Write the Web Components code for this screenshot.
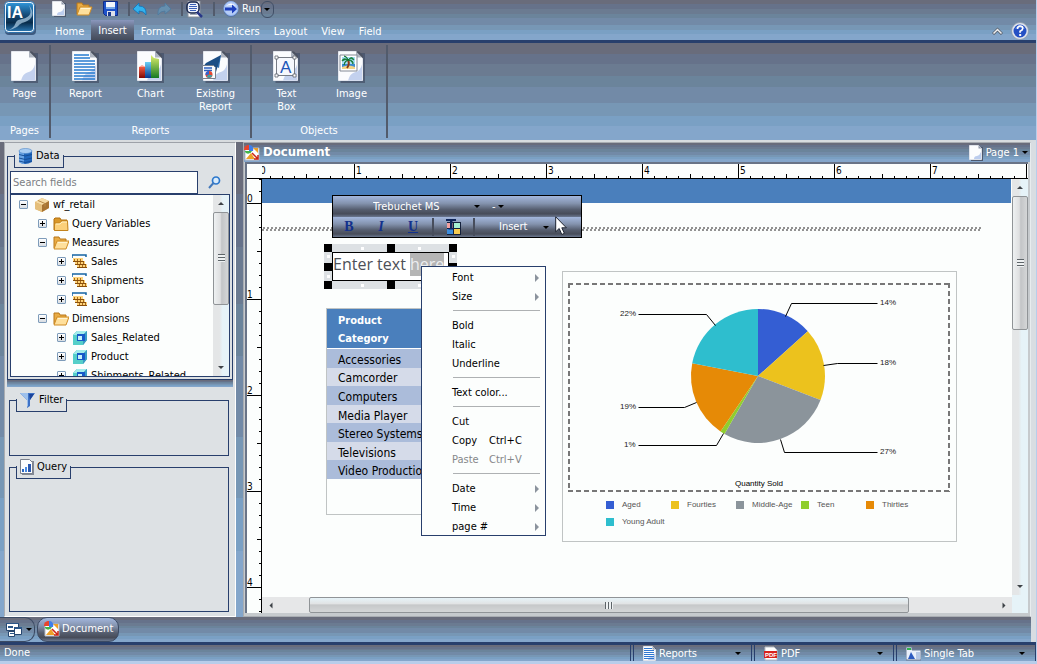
<!DOCTYPE html>
<html lang="en">
<head>
<meta charset="utf-8">
<title>Document</title>
<style>
  :root {
    --navy: #283f6c;
    --panel: #dde1e4;
    --steel: linear-gradient(#696c7b 11%, #66728a 11% 22%, #6b7b91 22% 34%, #6b849b 34% 45%, #728aa7 45% 62%, #7797b5 62% 75%, #7aa0c4 75% 86%, #84a6cb 86%);
    --dark: linear-gradient(#a3b7dd, #8493ae 35%, #555d6e 65%, #474c59 85%, #6b7890);
  }
  * { box-sizing: border-box; }
  body {
    margin: 0;
    padding: 0 1px 3px 0;
    height: 100vh;
    display: flex;
    flex-direction: column;
    overflow: hidden;
    background: #b7cdea;
    color: #000;
    font: 11px/14px "DejaVu Sans Condensed", "DejaVu Sans", sans-serif;
    font-stretch: condensed;
  }
  main {
    flex: 1;
    min-height: 0;
    display: flex;
    gap: 7px;
    padding-left: 4px;
    background: var(--steel);
    border-top: 2px solid #d8dcdf;
    border-right: 5px solid #d8dde2;
  }
</style>
</head>
<body>
<app-header></app-header>
<ribbon-bar>
  <ribbon-group label="Pages">
    <ribbon-button icon="page">Page</ribbon-button>
  </ribbon-group>
  <ribbon-group label="Reports">
    <ribbon-button icon="report">Report</ribbon-button>
    <ribbon-button icon="chart">Chart</ribbon-button>
    <ribbon-button icon="existing">Existing<br>Report</ribbon-button>
  </ribbon-group>
  <ribbon-group label="Objects">
    <ribbon-button icon="textbox">Text<br>Box</ribbon-button>
    <ribbon-button icon="image">Image</ribbon-button>
  </ribbon-group>
</ribbon-bar>
<main>
  <side-bar></side-bar>
  <document-window></document-window>
</main>
<task-bar></task-bar>
<status-bar></status-bar>

<script>
const sheet = (w, h) => `<path d="M${w * .1} 2h${w}v${h}H${w * .1}z" fill="#465168" opacity=".75"/><path d="M.5.5h${w - 7}l6 6v${h - 7}H.5z" fill="#fbfcfe" stroke="#e4e7ee"/>
  <path d="M${w - 1} ${h * .45}v${h * .53}H${w * .4}q2-7 ${w * .25}-8q${w * .25}-1 ${w * .32}-9z" fill="#c3d1ee"/><path d="M${w - 7} .5v6h6z" fill="#aeb4c0"/><path d="M${w - 7} .5l7 7v-3l-4-4z" fill="#4c5261"/>`;
const smallSheet = '<path d="M2 2h12v14H2z" fill="#4d5a70"/><path d="M.5.5h9l3 3v11H.5z" fill="#fcfdfe" stroke="#dfe3ea"/><path d="M12 7v7H5q0-3 3-3 3-1 4-4" fill="#bccdee"/><path d="M9.500.5v3h3z" fill="#8f98a8"/>';
const folderOpen = '<path d="M1 13V2h5l1 2h6v3" fill="#e9ac45" stroke="#b87719"/><path d="M1 14L4 6h12l-3 8z" fill="#ffe09c" stroke="#cf8c25"/><path d="M5 7.500h9" stroke="#fff3cf"/>';
const pieLogo = '<path d="M1 3h14v12H1z" fill="#fff" stroke="#b9bcc5"/><path d="M0 5a4.500 4.500 0 0 1 5-5v5z" fill="#e8452c"/><path d="M6 0a4.500 4.500 0 0 1 3 6H5V0z" fill="#3e7eea"/><path d="M1 6h7a4 4 0 0 1-7 1z" fill="#44b649"/><path d="M9 3h5v5zM2 14l5-6 4 6z" fill="#eda027"/><path d="M8 8l6 6m0-4v4h-4" fill="none" stroke="#cc2415" stroke-width="1.500"/>';

const icons = {
  logo: [32, 34, `<defs><linearGradient id="a" x2="0" y2="1"><stop stop-color="#2f93d6"/><stop offset=".4" stop-color="#174f7d"/><stop offset=".7" stop-color="#082c4b"/><stop offset="1" stop-color="#2873ad"/></linearGradient></defs>
    <rect x="1" y="2" width="31" height="32" rx="4" fill="#3d5a80"/><rect x=".5" y=".5" width="30" height="31" rx="4" fill="#e8f2fa" stroke="#2b6faa"/><rect x="2" y="2" width="27" height="28" rx="3" fill="url(#a)"/>
    <path d="M5 29C15 24 8 20 18 18c9-2 10-6 7-14 6 8 4 14-4 17-8 2-4 5-16 8z" fill="#a9c9e2" opacity=".75"/><text x="3" y="17" fill="#fff" font-family="Liberation Sans, sans-serif" font-weight="bold" font-size="16">IA</text>`],
  new: [14, 16, smallSheet],
  folder: [17, 16, folderOpen],
  save: [15, 16, '<path d="M.5.5h14v14h-12l-2-2z" fill="#1c52c9" stroke="#102c86"/><path d="M3 1h9v6H3z" fill="#f2f6fc"/><path d="M4 10h8v5H4z" fill="#dde1ea"/><path d="M5 11h3v4H5z" fill="#19398e"/><path d="M3 6h9v2H3z" fill="#79a9e8"/>'],
  undo: [14, 13, '<path d="M0 6l6-6v3q8 0 7 9-2-4-7-4v3z" fill="#31b2ee" stroke="#1271b5" stroke-width=".8"/>'],
  redo: [14, 13, '<path d="M14 6L8 0v3Q0 3 1 12q2-4 7-4v3z" fill="#668fae" stroke="#4d7aa0" stroke-width=".8"/>'],
  preview: [17, 17, '<path d="M2 0h12v16H2z" fill="#fff" stroke="#8a909c"/><path d="M4 13h7v1H4z" fill="#a5acb8"/><rect x="1" y="1" width="12" height="11" rx="4" fill="#eff3fd" stroke="#15234a" stroke-width="1.500"/><path d="M4 3.500h6M3 5.500h8M3 7.500h8M4 9.500h6" stroke="#3c60b8"/><path d="M11 11l5 5" stroke="#293787" stroke-width="2.500"/>'],
  run: [16, 16, '<circle cx="8" cy="8.500" r="7.500" fill="#5674a6"/><circle cx="8" cy="7.500" r="7" fill="#b6cdf7" stroke="#8fb3ef"/><path d="M3 5q5-5 10 0-5-2-10 0z" fill="#fff"/><path d="M2 6.500h7V3.500l5 4.500-5 4.500V9.500H2z" fill="#1d3fbe"/>'],
  help: [18, 18, '<circle cx="9" cy="9" r="8.500" fill="#dfe5ed" stroke="#8b97a8" stroke-width=".8"/><circle cx="9" cy="9" r="6.500" fill="#2450c4"/><path d="M4 7q5-7 10 0-5-3-10 0z" fill="#7fa4f1"/><path d="M6.500 7q0-3 2.700-3t2.500 2.400q0 1.600-2.600 2.900v1.400" fill="none" stroke="#fff" stroke-width="1.700"/><path d="M8.200 12h2v2h-2z" fill="#fff"/>'],
  collapse: [11, 8, '<path d="M1 7l4.500-4.500L10 7" fill="none" stroke="#555b66" stroke-width="3"/><path d="M1.500 6.500l4-4 4 4" fill="none" stroke="#f0f2f4" stroke-width="1.500"/>'],
  page: [27, 32, sheet(25, 30)],
  report: [27, 32, sheet(25, 30) + '<path d="M2 4h15M2 7h16M2 10h21M2 13h21M2 16h21M2 19h21M2 22h21M2 25h21M2 28h21" stroke="#277bd0" stroke-width="1.500"/>'],
  chart: [27, 32, `${sheet(25, 30)}<defs><linearGradient id="r" x2="0" y2="1"><stop stop-color="#f15b42"/><stop offset="1" stop-color="#7e0905"/></linearGradient><linearGradient id="b" x2="0" y2="1"><stop stop-color="#69cff6"/><stop offset="1" stop-color="#063991"/></linearGradient><linearGradient id="g" x2="0" y2="1"><stop stop-color="#e1f06c"/><stop offset="1" stop-color="#147a24"/></linearGradient></defs>
    <path d="M2 16h8v11H2z" fill="url(#r)"/><path d="M8 11h7v16H8z" fill="url(#b)"/><path d="M14 4l3 3 5 1v19h-8z" fill="url(#g)"/><path d="M2 16l3-2 4 2z" fill="#ffa18f"/>`],
  existing: [28, 32, `<g transform="translate(1)">${sheet(25, 30)}</g><path d="M19 4L8 15l3 4 2-4 4 2z" fill="#2f6fb0"/><path d="M19 4L4 12l-4 5 9-2 5 6z" fill="#1c4e85"/><path d="M.5 14.500h11l2 2v11H.5z" fill="#f9fbfe" stroke="#777f8d"/><path d="M2 17h8M2 19.500h8" stroke="#2a5fc0" stroke-width="1.300"/><circle cx="7" cy="23.500" r="3.500" fill="#e64430"/><path d="M7 23.500V20a3.500 3.500 0 0 0-3.500 4z" fill="#2d64d4"/><path d="M7 23.500l3.400 1a3.500 3.500 0 0 1-6 1z" fill="#38a3a9"/>`],
  textbox: [27, 32, sheet(25, 30) + '<path d="M3.500 6.500h18v18h-18z" fill="#f6f8fd" stroke="#777c86"/><path d="M2 5h3v3H2zM20 5h3v3h-3zM2 23h3v3H2zM20 23h3v3h-3z" fill="#fff" stroke="#5f646e" stroke-width=".8"/><text x="7" y="22" fill="#1d55b8" font-family="Liberation Sans, sans-serif" font-size="17">A</text>'],
  image: [27, 32, sheet(25, 30) + '<path d="M2 4h17v16H2z" fill="#fff" stroke="#848a95"/><path d="M4 6h13v8H4z" fill="#a6def6"/><path d="M4 13h13v3H4z" fill="#3b8bd0"/><path d="M4 16q7-3 13 0v2H4z" fill="#f2d487"/><path d="M10 9q2 4-1 8" stroke="#8b3b16" stroke-width="2" fill="none"/><path d="M10 9q-5-3-6 1 3-2 6-1-4 1-4 5 1-4 4-5 4 0 5 4 1-4-5-4 3-3 6 0-2-5-6 0-1-4-4-4 3 1 4 4" fill="#15883b" stroke="#10752f" stroke-width=".8"/>'],
  database: [15, 17, '<path d="M1 3v11q6 4 13 0V3z" fill="#2167bd"/><path d="M1 3v11q2 2 5 2V4z" fill="#6aa5e6"/><ellipse cx="7.500" cy="3" rx="6.500" ry="2.500" fill="#a9cdf3" stroke="#4f86c6" stroke-width=".6"/><path d="M1 6.500q6 3 13 0M1 10q6 3 13 0M1 13q6 3 13 0" fill="none" stroke="#164e96"/>'],
  search: [13, 13, '<circle cx="8" cy="4.500" r="3.500" fill="#d9ebfb" stroke="#2b77cc" stroke-width="1.700"/><path d="M5.500 7L1 12" stroke="#4379bb" stroke-width="2"/>'],
  box: [16, 16, '<path d="M1 5l7-4 7 3v7l-7 4-7-3z" fill="#dcb069"/><path d="M1 5l7-4 7 3-7 4z" fill="#f6dca6"/><path d="M8 8l7-4v7l-7 4z" fill="#a87432"/><path d="M1 5l7 3v7l-7-3z" fill="#e5bf7b"/><path d="M4 3.500l7 3v3" fill="none" stroke="#b98d48"/>'],
  closed: [16, 16, '<path d="M1 14V3l1-1h5l1 2h6v10z" fill="#d99729" stroke="#b2700f"/><path d="M1.500 14.500V7h5l2-2h6l.5 9.500z" fill="#fbd07a" stroke="#c3831c"/><path d="M3 8h4l2-2h5" fill="none" stroke="#fff1c5"/>'],
  open: [16, 16, folderOpen],
  measure: [16, 16, '<path d="M0 4V1h14v2" fill="none" stroke="#1464a3" stroke-width="1.500"/><path d="M1 4h10v4H1zM3 7h10v4H3zM5 10h10v4H5z" fill="#ffd57b"/><path d="M1 7.500h11M3 10.500h11M5 13.500h10" stroke="#8a4f0a"/><path d="M2.500 5v2m3-2v2m3-2v2M5.500 8v2m3-2v2m3-2v2M7.500 11v2m3-2v2m3-2v2" stroke="#a86b1c"/>'],
  dimension: [16, 16, '<path d="M1 5l4-4h10v9l-4 5H1z" fill="#28a6ab"/><path d="M1 5l4-4h10l-4 4z" fill="#a2eceb"/><path d="M11 5l4-4v9l-4 5z" fill="#3a9dc6"/><path d="M1 5h10v10H1z" fill="#55cfc9"/><path d="M5 4h8v7H5z" fill="#1759c9"/><path d="M6 6h4v4H6z" fill="#c5f3f9"/>'],
  filter: [16, 16, '<path d="M0 1h15l-5 7v6l-3 2V8z" fill="#3e72c6"/><path d="M0 1h8v13l-1 1V8z" fill="#9dc0ec"/><path d="M9 2h5l-4 6z" fill="#1b449b"/>'],
  query: [14, 16, '<path d="M2 2h12v14H2z" fill="#838995"/><path d="M.5.5h9l3 3v11H.5z" fill="#fcfdfe" stroke="#7b818c"/><path d="M2 10h2v3H2z" fill="#2866c4"/><path d="M5 8h2v5H5z" fill="#4c8ce0"/><path d="M8 5h3v8H8z" fill="#2a58b0"/>'],
  document: [16, 16, pieLogo],
  windows: [16, 16, '<path d="M.5 1.500h12v7H.5zM2.500 9.500h6v5h-6z" fill="#fff" stroke="#26466f"/><path d="M0 1h13v1H0zM2 4h5v2H2zM4 11h4v1H4z" fill="#2b5688"/><path d="M8.500 5.500h7v7h-7z" fill="#fff" stroke="#26466f"/><path d="M8 5h8v2H8z" fill="#2b5688"/>'],
  lines: [13, 15, smallSheet + '<path d="M1 2.500h8M1 4.500h10M1 6.500h10M1 8.500h10M1 10.500h10M1 12.500h10" stroke="#2f77d1"/>'],
  pdf: [14, 15, '<path d="M1 1h9l3 3v10H1z" fill="#fff" stroke="#b9bec7"/><path d="M0 5h13v7H0z" fill="#d8221c"/><text x="1" y="11" fill="#fff" font-family="Liberation Sans, sans-serif" font-weight="bold" font-size="6">PDF</text>'],
  tab: [15, 15, '<path d="M0 1h6v3h9v10H0z" fill="#e9f0fb" stroke="#6b7a93"/><path d="M1 2h4v2H1z" fill="#2fb14e"/><path d="M2 13l3-7 4 7z" fill="#2d5bc0"/><path d="M10 6h4v7h-4z" fill="#b6c8e6"/>'],
  color: [17, 17, '<path d="M2 3h14v13H2z" fill="#14213c"/><path d="M2 4h6v5H2z" fill="#f3a0a0"/><path d="M9 4h6v5H9z" fill="#a5f0d3"/><path d="M2 10h6v5H2z" fill="#3b8bdc"/><path d="M9 10h6v5H9z" fill="#f6cb51"/><path d="M1 0h10v2H7.500v7H9v1.500H3.500V9H5V2H1z" fill="#0d2459"/>'],
  cursor: [12, 20, '<path d="M.7.8v15l3.500-3.300 2.600 6 2.600-1.200-2.600-5.500h4.600z" fill="#fff" stroke="#1c2230"/>'],
};

// Attaches the markup of a component with the shared reset in front
function fill(host, css, html) {
  const root = host.shadowRoot || host.attachShadow({ mode: 'open' });
  root.innerHTML = `<style>
    *, :host { box-sizing: border-box; }
    button, select, input { margin: 0; padding: 0; border: 0; border-radius: 0; background: none; color: inherit; font: inherit; outline: none; }
    select { appearance: none; }
    ${css}</style>${html}`;
}

class AppIcon extends HTMLElement {
  connectedCallback() {
    const [w, h, body] = icons[this.getAttribute('name')];
    fill(this, ':host { display: inline-block; flex: none; } svg { display: block; }',
      `<svg width="${w}" height="${h}" viewBox="0 0 ${w} ${h}" aria-hidden="true">${body}</svg>`);
  }
}
customElements.define('app-icon', AppIcon);

class DropCaret extends HTMLElement {
  connectedCallback() {
    fill(this, ':host { display: inline-block; flex: none; border: 3px solid transparent; border-top-color: #000; border-bottom: 0; }', '');
  }
}
customElements.define('drop-caret', DropCaret);

class AppHeader extends HTMLElement {
  connectedCallback() {
    const tabs = ['Home', 'Insert', 'Format', 'Data', 'Slicers', 'Layout', 'View', 'Field'];
    const tabHtml = tabs.map(tab =>
      `<button role="tab" ${tab === 'Insert' ? 'aria-selected="true"' : ''}>${tab}</button>`).join('');
    fill(this, `
      :host { display: flex; flex: none; height: 43px; padding: 0 7px 0 4px; color: #fff; background: var(--steel); border-bottom: 3px solid var(--navy); }
      .logo { margin-right: 12px; }
      .middle { flex: 1; display: flex; flex-direction: column; justify-content: space-between; }
      .quick { display: flex; align-items: center; height: 18px; padding-left: 4px; }
      .quick button { display: flex; align-items: center; margin-right: 10px; }
      .quick i { width: 2px; height: 14px; background: #525b6c; }
      .quick i + button { margin-left: 3px; }
      .quick .run { gap: 3px; margin: 0 0 0 8px; }
      .quick .more { justify-content: center; width: 13px; height: 17px; margin: 0; border: 1px solid #414f67; border-radius: 6px; }
      nav { display: flex; height: 20px; }
      nav button { padding: 4px 7px 0; }
      nav [aria-selected] { padding-top: 2px; background: linear-gradient(#8a97bd, #606b81 45%, #444b5a); }
      .help { display: flex; gap: 8px; align-items: center; align-self: flex-end; height: 19px; }
      .help button { display: flex; }`, `
      <button class="logo" aria-label="Application menu"><app-icon name="logo"></app-icon></button>
      <div class="middle">
        <div class="quick">
          <button aria-label="New"><app-icon name="new"></app-icon></button>
          <button aria-label="Open"><app-icon name="folder"></app-icon></button>
          <button aria-label="Save"><app-icon name="save"></app-icon></button>
          <i></i>
          <button aria-label="Undo"><app-icon name="undo"></app-icon></button>
          <button aria-label="Redo"><app-icon name="redo"></app-icon></button>
          <i></i>
          <button aria-label="Preview"><app-icon name="preview"></app-icon></button>
          <i></i>
          <button class="run"><app-icon name="run"></app-icon>Run</button>
          <button class="more" aria-label="Run options"><drop-caret></drop-caret></button>
        </div>
        <nav role="tablist">${tabHtml}</nav>
      </div>
      <div class="help">
        <button aria-label="Collapse ribbon"><app-icon name="collapse"></app-icon></button>
        <button aria-label="Help"><app-icon name="help"></app-icon></button>
      </div>`);
  }
}
customElements.define('app-header', AppHeader);

class RibbonBar extends HTMLElement {
  connectedCallback() {
    fill(this, ':host { display: flex; flex: none; height: 97px; padding: 2px 0; color: #fff; background: var(--steel); }', '<slot></slot>');
  }
}
customElements.define('ribbon-bar', RibbonBar);

class RibbonGroup extends HTMLElement {
  connectedCallback() {
    fill(this, `
      :host { display: flex; flex-direction: column; justify-content: space-between; padding: 6px 2px 0; border-right: 2px solid #525b6c; }
      .tools { display: flex; }
      .label { text-align: center; }`,
      `<div class="tools"><slot></slot></div><div class="label">${this.getAttribute('label')}</div>`);
  }
}
customElements.define('ribbon-group', RibbonGroup);

class RibbonButton extends HTMLElement {
  connectedCallback() {
    fill(this, `
      :host { display: block; width: 65px; }
      :host(:only-child) { width: 45px; }
      button { display: flex; flex-direction: column; align-items: center; gap: 4px; width: 100%; line-height: 13px; }`,
      `<button><app-icon name="${this.getAttribute('icon')}"></app-icon><span><slot></slot></span></button>`);
  }
}
customElements.define('ribbon-button', RibbonButton);

class ScrollBar extends HTMLElement {
  connectedCallback() {
    // parts: share of the track before, under and after the thumb
    const [before, thumb, after] = this.getAttribute('parts').split(' ');
    fill(this, `
      :host { display: flex; flex-direction: column; width: 16px; background: linear-gradient(90deg, #e4e6e7 40%, #e6f3f8 60%); }
      button { flex: none; height: 17px; display: flex; align-items: center; justify-content: center; }
      button::before { content: ""; border: 3px solid transparent; border-bottom-color: #3d4247; border-top: 0; }
      button:last-of-type::before { transform: rotate(180deg); }
      .thumb { display: flex; align-items: center; justify-content: center; border: 1px solid #909497; border-radius: 2px; background: linear-gradient(90deg, #eef1f2, #dedfe0 45%, #c3c5c7 55%, #d4d6d7); }
      .thumb::before { content: ""; width: 7px; height: 8px; background: repeating-linear-gradient(#5d6468 0 1px, #eef1f2 1px 3px); }
      :host([horizontal]) { flex-direction: row; width: auto; height: 16px; background: #e6e7e8; }
      :host([horizontal]) button { width: 17px; height: auto; }
      :host([horizontal]) button::before { transform: rotate(-90deg); }
      :host([horizontal]) button:last-of-type::before { transform: rotate(90deg); }
      :host([horizontal]) .thumb { background: linear-gradient(#e6f3f8, #e2e4e5 40%, #c6c8c9 50%, #d4d6d7); }
      :host([horizontal]) .thumb::before { width: 8px; height: 7px; background: repeating-linear-gradient(90deg, #5d6468 0 1px, #eef1f2 1px 3px); }`, `
      <button aria-label="Scroll back"></button>
      <div style="flex:${before}"></div><div class="thumb" style="flex:${thumb}"></div><div style="flex:${after}"></div>
      <button aria-label="Scroll forward"></button>`);
  }
}
customElements.define('scroll-bar', ScrollBar);

class ToolPanel extends HTMLElement {
  connectedCallback() {
    fill(this, `
      :host { display: flex; }
      fieldset { flex: 1; min-width: 0; margin: 0; padding: 0; border: 1px solid var(--navy); display: flex; flex-direction: column; }
      legend { display: flex; align-items: center; gap: 3px; height: 23px; margin-left: 6px; padding: 0 4px; border-bottom: 1px solid var(--navy);
        background: linear-gradient(var(--navy), var(--navy)) 0 100% / 1px 12px no-repeat, linear-gradient(var(--navy), var(--navy)) 100% 100% / 1px 12px no-repeat; }
      .body { flex: 1; min-height: 0; display: flex; flex-direction: column; }`, `
      <fieldset>
        <legend><app-icon name="${this.getAttribute('icon')}"></app-icon>${this.getAttribute('label')}</legend>
        <div class="body"><slot></slot></div>
      </fieldset>`);
  }
}
customElements.define('tool-panel', ToolPanel);

class FieldTree extends HTMLElement {
  connectedCallback() {
    const rows = [
      [0, '-', 'box', 'wf_retail'],
      [1, '+', 'closed', 'Query Variables'],
      [1, '-', 'open', 'Measures'],
      [2, '+', 'measure', 'Sales'],
      [2, '+', 'measure', 'Shipments'],
      [2, '+', 'measure', 'Labor'],
      [1, '-', 'open', 'Dimensions'],
      [2, '+', 'dimension', 'Sales_Related'],
      [2, '+', 'dimension', 'Product'],
      [2, '+', 'dimension', 'Shipments_Related'],
    ];
    const html = rows.map(([level, state, icon, name]) => `
      <li role="treeitem" aria-level="${level + 1}" style="--level:${level}">
        <button class="${state === '+' ? 'plus' : ''}" aria-label="${state === '+' ? 'Expand' : 'Collapse'}"></button>
        <app-icon name="${icon}"></app-icon><span>${name}</span>
      </li>`).join('');
    fill(this, `
      :host { display: flex; min-height: 0; flex: 1; border: 1px solid var(--navy); background: #fcfefd; }
      ul { flex: 1; margin: 0; padding: 0; overflow: hidden; list-style: none; }
      li { display: flex; align-items: center; height: 19px; padding-left: calc(8px + 19px * var(--level)); }
      button { flex: none; width: 9px; height: 9px; margin-right: 6px; border: 1px solid #7e9cba; border-radius: 1px; background: linear-gradient(#000, #000) center / 5px 1px no-repeat, linear-gradient(#fff, #d8dde2); }
      .plus { background: linear-gradient(#000, #000) center / 5px 1px no-repeat, linear-gradient(#000, #000) center / 1px 5px no-repeat, linear-gradient(#fff, #d8dde2); }
      span { margin-left: 3px; }`,
      `<ul role="tree">${html}</ul><scroll-bar parts="0 92 55"></scroll-bar>`);
  }
}
customElements.define('field-tree', FieldTree);

class SideBar extends HTMLElement {
  connectedCallback() {
    fill(this, `
      :host { flex: none; width: 232px; padding: 2px 2px 4px; display: flex; flex-direction: column; background: var(--panel); border: 1px solid #fff; border-top-color: #9da1a8; border-left-color: #a9adb2; }
      .data { height: 235px; }
      .find { display: flex; padding: 3px 2px 0; }
      input { flex: 1; min-width: 0; height: 23px; padding: 0 2px; border: 1px solid var(--navy); background: #fcfefd; }
      input::placeholder { color: #7b7f84; opacity: 1; }
      .find button { display: flex; align-items: center; justify-content: center; width: 32px; }
      field-tree { margin: 0 2px 2px; }
      hr { flex: none; width: 100%; height: 7px; margin: 0 0 2px; border: 0; background: var(--steel); }
      .filter { flex: none; height: 67px; margin: 0 4px 0 2px; }
      .query { flex: 1; margin: 0 4px 0 2px; }`, `
      <tool-panel class="data" icon="database" label="Data">
        <div class="find">
          <input type="text" placeholder="Search fields" aria-label="Search fields">
          <button aria-label="Search"><app-icon name="search"></app-icon></button>
        </div>
        <field-tree></field-tree>
      </tool-panel>
      <hr>
      <tool-panel class="filter" icon="filter" label="Filter"></tool-panel>
      <tool-panel class="query" icon="query" label="Query"></tool-panel>`);
  }
}
customElements.define('side-bar', SideBar);

class PageRuler extends HTMLElement {
  connectedCallback() {
    const vertical = this.hasAttribute('vertical');
    const origin = Number(this.getAttribute('origin'));
    const count = Number(this.getAttribute('marks'));
    let marks = '';
    // eight marks to the inch, 12px apart
    for (let i = -2; i <= count; i++) {
      const at = origin + i * 12;
      const size = i % 8 === 0 ? 15 : i % 4 === 0 ? 5 : 3;
      marks += vertical ? `<path d="M${15 - size} ${at + .5}h${size}"/>` : `<path d="M${at + .5} ${15 - size}v${size}"/>`;
      if (i >= 0 && i < count && i % 8 === 0) {
        marks += vertical ? `<text x="0" y="${at - 1}">${i / 8}</text>` : `<text x="${at + 2}" y="10">${i / 8}</text>`;
      }
    }
    fill(this, `
      :host { display: block; position: relative; min-width: 0; min-height: 0; overflow: hidden; background: #fcfefd; border-bottom: 1px solid #000; }
      :host([vertical]) { border-bottom: 0; border-right: 1px solid #000; }
      svg { position: absolute; inset: 0; width: 100%; height: 100%; }
      path { stroke: #000; }
      text { font-size: 10px; }`, `<svg>${marks}</svg>`);
  }
}
customElements.define('page-ruler', PageRuler);

class FormatToolbar extends HTMLElement {
  connectedCallback() {
    fill(this, `
      :host { display: block; width: 250px; border: 1px solid #000; color: #fff; }
      div { display: flex; align-items: center; height: 21px; background: var(--dark); }
      div + div { height: 20px; }
      select { height: 100%; }
      .font { width: 101px; margin-left: 40px; }
      .size { width: 6px; margin-left: 12px; }
      button { height: 100%; }
      .mark { width: 32px; color: #12308c; font: bold 14px/18px "Liberation Serif", serif; }
      .mark + i { margin-left: 3px; }
      i { flex: none; width: 2px; height: 18px; background: #474d5c; }
      .color { display: flex; align-items: center; padding: 0 11px; }
      .insert { display: flex; align-items: center; gap: 16px; padding-left: 24px; }`, `
      <div>
        <select class="font" aria-label="Font"><option>Trebuchet MS</option></select><drop-caret></drop-caret>
        <select class="size" aria-label="Size"><option>-</option></select><drop-caret></drop-caret>
      </div>
      <div>
        <button class="mark" aria-label="Bold">B</button>
        <button class="mark" aria-label="Italic" style="font-style:italic">I</button>
        <button class="mark" aria-label="Underline" style="text-decoration:underline">U</button>
        <i></i>
        <button class="color" aria-label="Text color"><app-icon name="color"></app-icon></button>
        <i></i>
        <button class="insert">Insert <drop-caret></drop-caret></button>
      </div>`);
  }
}
customElements.define('format-toolbar', FormatToolbar);

class ContextMenu extends HTMLElement {
  connectedCallback() {
    const groups = [
      [['Font', '>'], ['Size', '>']],
      [['Bold'], ['Italic'], ['Underline']],
      [['Text color...']],
      [['Cut'], ['Copy', 'Ctrl+C'], ['Paste', 'Ctrl+V', true]],
      [['Date', '>'], ['Time', '>'], ['page #', '>']],
    ];
    const html = groups.map(group => group.map(([name, extra, off]) => `
      <button role="menuitem" ${off ? 'disabled' : ''}>
        <span>${name}</span>${extra === '>' ? '<b></b>' : extra ? `<kbd>${extra}</kbd>` : ''}
      </button>`).join('')).join('<hr>');
    fill(this, `
      :host { display: flex; flex-direction: column; width: 125px; border: 1px solid var(--navy); background: #fcfefd; }
      button { display: flex; align-items: center; height: 19px; padding: 2px 6px 0 30px; text-align: left; white-space: nowrap; }
      button:disabled { color: #858789; }
      span { min-width: 32px; }
      kbd { margin-left: 5px; font: inherit; }
      b { margin-left: auto; border: 4px solid transparent; border-left-color: #8b939d; border-right: 0; }
      hr { width: 87px; height: 1px; margin: 5px 0 4px 31px; border: 0; background: #aeb1b3; }`, html);
    this.setAttribute('role', 'menu');
  }
}
customElements.define('context-menu', ContextMenu);

class TextFrame extends HTMLElement {
  connectedCallback() {
    const cells = [0, 1, 2, 3, 4, 5, 6, 7, 8].map(i =>
      i === 4 ? '<div class="text" contenteditable="true"><slot></slot></div>' : `<i class="${i % 2 ? 'side' : ''} ${i === 3 || i === 5 ? 'tall' : ''}"></i>`).join('');
    fill(this, `
      :host { display: grid; grid-template: 8px 29px 8px / 8px 117px 8px; background: var(--panel); }
      i { background: #000; }
      i.side { background: linear-gradient(#000, #000) center / 8px 8px no-repeat, linear-gradient(#fff, #fff) 25% 50% / 3px 3px no-repeat, linear-gradient(#fff, #fff) 75% 50% / 3px 3px no-repeat; }
      i.tall { background: linear-gradient(#000, #000) center / 8px 8px no-repeat, linear-gradient(#fff, #fff) 50% 10% / 3px 3px no-repeat, linear-gradient(#fff, #fff) 50% 90% / 3px 3px no-repeat; }
      .text { border: 1px solid #000; background: #fff; color: #4d5057; font: 16px/23px "Open Sans", sans-serif; white-space: nowrap; outline: none; }
      ::slotted(mark) { display: inline-block; background: #b5b5b5; color: #eceef0; }`, cells);
  }
}
customElements.define('text-frame', TextFrame);

class CategoryReport extends HTMLElement {
  connectedCallback() {
    const names = ['Accessories', 'Camcorder', 'Computers', 'Media Player', 'Stereo Systems', 'Televisions', 'Video Production'];
    fill(this, `
      :host { display: block; height: 207px; border: 1px solid #c0c4c4; }
      table { width: 100%; height: 170px; border-collapse: collapse; font: 12px/14px "DejaVu Sans Condensed", "DejaVu Sans", sans-serif; font-stretch: condensed; }
      th, td { padding: 0 11px; text-align: left; white-space: nowrap; }
      th { height: 38px; padding-top: 3px; border-bottom: 1px solid #fff; background: #4a7fbc; color: #fff; font-size: 11px; line-height: 18px; }
      td { padding-top: 3px; }
      tr:nth-child(odd) td { background: #abbcda; }
      tr:nth-child(even) td { background: #d5dbe9; }`, `
      <table>
        <thead><tr><th scope="col">Product<br>Category</th></tr></thead>
        <tbody>${names.map(name => `<tr><td>${name}</td></tr>`).join('')}</tbody>
      </table>`);
  }
}
customElements.define('category-report', CategoryReport);

class PieReport extends HTMLElement {
  connectedCallback() {
    // name, colour, end angle, leader line, label, label place
    const slices = [
      ['Aged', '#345ed3', 48, 'M223 45l6-13h86', '14%', 318, 34],
      ['Fourties', '#ecc21d', 111, 'M261 94l14-2h40', '18%', 318, 94],
      ['Middle-Age', '#8b949b', 210, 'M218 168l4 13h93', '27%', 318, 183],
      ['Teen', '#8fce2e', 214, 'M161 162l-7 12H76', '1%', 62, 176],
      ['Thirties', '#e68a06', 281, 'M134 131l-12 5H76', '19%', 58, 138],
      ['Young Adult', '#2ebece', 360, 'M153 54l-9-11H76', '22%', 58, 45],
    ];
    const cx = 196, cy = 105, r = 67;
    const point = deg => {
      const a = deg * Math.PI / 180;
      return `${(cx + r * Math.sin(a)).toFixed(1)} ${(cy - r * Math.cos(a)).toFixed(1)}`;
    };
    let start = 0;
    let pie = '';
    slices.forEach(([, colour, end, line, label, x, y]) => {
      pie += `<path d="M${cx} ${cy}L${point(start)}A${r} ${r} 0 0 1 ${point(end)}z" fill="${colour}"/>
        <path d="${line}" fill="none" stroke="#000" transform="translate(.5 .5)"/><text x="${x}" y="${y}">${label}</text>`;
      start = end;
    });
    fill(this, `
      :host { display: block; width: 395px; height: 271px; padding: 11px 6px 0 5px; border: 1px solid #c0c4c4; font: 8px/10px "Liberation Sans", Arial, sans-serif; }
      figure { margin: 0; height: 209px; background:
        repeating-linear-gradient(90deg, #777 0 5px, transparent 5px 8px) 0 0 / 100% 2px no-repeat,
        repeating-linear-gradient(90deg, #777 0 5px, transparent 5px 8px) 0 100% / 100% 2px no-repeat,
        repeating-linear-gradient(#777 0 5px, transparent 5px 8px) 0 0 / 2px 100% no-repeat,
        repeating-linear-gradient(#777 0 5px, transparent 5px 8px) 100% 0 / 2px 100% no-repeat; }
      svg { display: block; width: 100%; height: 196px; overflow: visible; fill: #222; }
      figcaption { text-align: center; }
      ul { display: grid; grid-template-columns: repeat(5, 65px); row-gap: 7px; margin: 8px 0 0 38px; padding: 0; list-style: none; color: #555; }
      li { display: flex; align-items: center; gap: 8px; white-space: nowrap; }
      li i { width: 8px; height: 8px; }`, `
      <figure><svg viewBox="6 12 382 196">${pie}</svg><figcaption>Quantity Sold</figcaption></figure>
      <ul>${slices.map(([name, colour]) => `<li><i style="background:${colour}"></i>${name}</li>`).join('')}</ul>`);
  }
}
customElements.define('pie-report', PieReport);

class DocumentWindow extends HTMLElement {
  connectedCallback() {
    fill(this, `
      :host { flex: 1; min-width: 0; display: flex; flex-direction: column; border: 1px solid #a9adb2; border-right-color: #e8ecee; background: #c6cacd; }
      header { display: flex; align-items: center; gap: 3px; height: 19px; padding: 0 2px 0 0; color: #fff; background: var(--steel); }
      h1 { flex: 1; margin: 0; padding-bottom: 1px; font: bold 13px/16px "DejaVu Sans Condensed", "DejaVu Sans", sans-serif; font-stretch: condensed; }
      header button { display: flex; align-items: center; gap: 3px; }
      .body { flex: 1; min-height: 0; display: grid; grid-template: 15px 1fr 18px / 15px 1fr 16px; border: solid #697487; border-width: 2px 0 0 2px; margin: 0 2px 3px 1px; background: #fcfefd; }
      .corner { border-bottom: 1px solid #000; }
      .across { grid-column: 2 / 4; }
      .down { grid-row: 2 / 4; }
      .canvas { position: relative; overflow: hidden; margin-right: 1px; }
      .band { height: 24px; background: #4a7fbc; }
      .rule { width: 720px; height: 4px; margin-top: 24px; background:
        repeating-linear-gradient(90deg, transparent 0 1px, #929292 1px 3px, transparent 3px 4px) 0 0 / 100% 2px no-repeat,
        repeating-linear-gradient(90deg, #929292 0 2px, transparent 2px 4px) 0 100% / 100% 2px no-repeat; }
      .item { position: absolute; }
      .end { grid-column: 2; margin-top: 2px; }
      .grip { background: #e6f3f8; }`, `
      <header>
        <app-icon name="document"></app-icon><h1>Document</h1>
        <button><app-icon name="new"></app-icon>Page 1<drop-caret></drop-caret></button>
      </header>
      <div class="body">
        <div class="corner"></div>
        <page-ruler class="across" origin="-4" marks="64"></page-ruler>
        <page-ruler class="down" vertical origin="24" marks="34"></page-ruler>
        <div class="canvas">
          <div class="band"></div>
          <div class="rule"></div>
          <text-frame class="item" style="left:62px;top:65px">Enter text <mark>here</mark></text-frame>
          <category-report class="item" style="left:64px;top:129px;width:200px"></category-report>
          <pie-report class="item" style="left:300px;top:92px"></pie-report>
          <format-toolbar class="item" style="left:70px;top:16px"></format-toolbar>
          <context-menu class="item" style="left:159px;top:87px"></context-menu>
          <app-icon class="item" name="cursor" style="left:293px;top:37px"></app-icon>
        </div>
        <scroll-bar parts="0 133 249"></scroll-bar>
        <scroll-bar class="end" horizontal parts="30 598 86"></scroll-bar>
        <div class="grip"></div>
      </div>`);
  }
}
customElements.define('document-window', DocumentWindow);

class TaskBar extends HTMLElement {
  connectedCallback() {
    fill(this, `
      :host { display: flex; flex: none; gap: 2px; height: 25px; color: #fff; background: var(--steel); border-right: 5px solid #d8dde2; }
      button { display: flex; align-items: center; height: 25px; border: 1px solid #3b4a64; border-radius: 10px; }
      .list { gap: 4px; padding: 0 2px 0 6px; border-left: 0; border-radius: 0 10px 10px 0; }
      .open { gap: 2px; padding: 0 5px 2px 6px; background: var(--dark); }`, `
      <button class="list" aria-label="Windows"><app-icon name="windows"></app-icon><drop-caret></drop-caret></button>
      <button class="open"><app-icon name="document"></app-icon>Document</button>`);
  }
}
customElements.define('task-bar', TaskBar);

class StatusBar extends HTMLElement {
  connectedCallback() {
    const choices = [['lines', 'Reports', 119], ['pdf', 'PDF', 140], ['tab', 'Single Tab', 140]];
    fill(this, `
      :host { display: flex; flex: none; gap: 2px; height: 19px; border-top: 3px solid var(--navy); color: #fff; background: var(--steel); }
      p { flex: 1; margin: 0; padding: 1px 0 0 4px; border-right: 1px solid var(--navy); }
      label { display: flex; align-items: center; gap: 3px; padding: 1px 10px 0 9px; border: solid var(--navy); border-width: 0 1px; }
      select { flex: 1; min-width: 0; }`,
      `<p>Done</p>${choices.map(([icon, name, width]) => `
        <label style="width:${width}px"><app-icon name="${icon}"></app-icon>
          <select aria-label="${name}"><option>${name}</option></select><drop-caret></drop-caret>
        </label>`).join('')}`);
  }
}
customElements.define('status-bar', StatusBar);
</script>
</body>
</html>
